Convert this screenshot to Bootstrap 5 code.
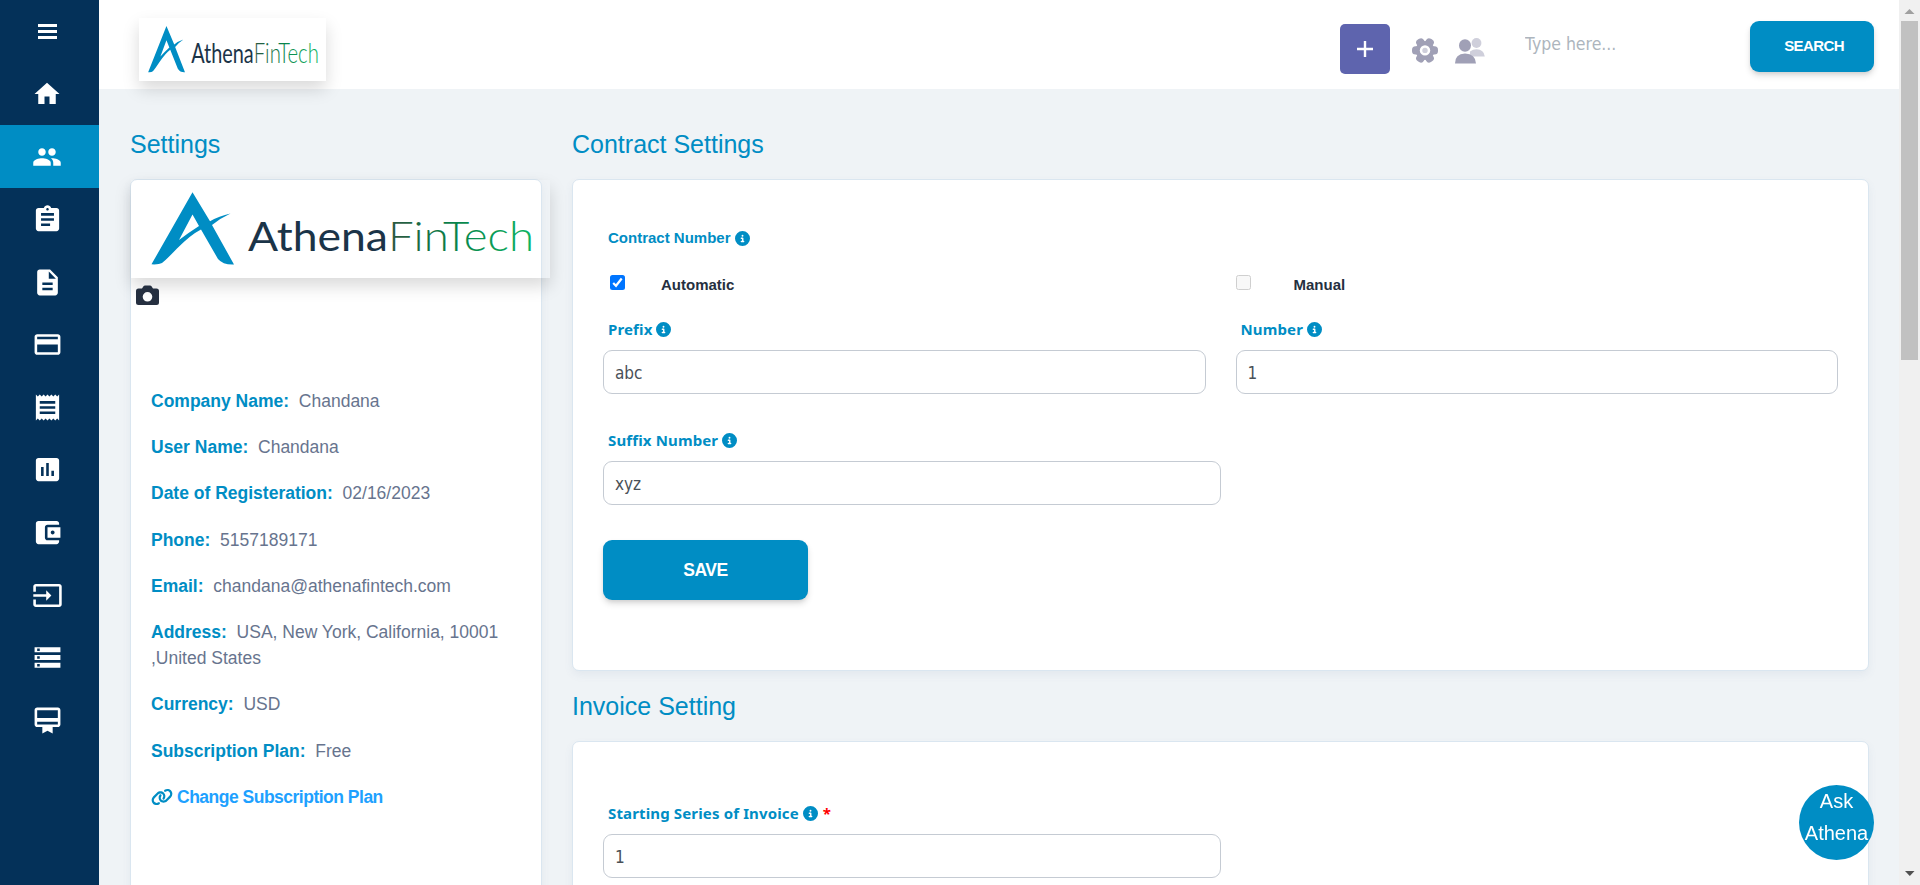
<!DOCTYPE html>
<html lang="en">
<head>
<meta charset="utf-8">
<meta name="viewport" content="width=device-width, initial-scale=1">
<title>AthenaFinTech - Settings</title>
<link href="https://cdn.jsdelivr.net/npm/bootstrap@5.3.0/dist/css/bootstrap.min.css" rel="stylesheet">
<style>
:root { --brand:#008dc4; --navy:#043159; }
body { font-family:"Liberation Sans",Arial,sans-serif; background:#eff3f6; color:#67748e; font-size:17.5px; }
.side-nav { width:99px; background:var(--navy); }
.side-nav a { height:62.6px; padding:1px 5px 0 0; color:#fff; }
.side-nav a.active { background:var(--brand); }
.side-nav svg { width:31px; height:31px; fill:currentColor; }
.side-nav .burger { height:62.5px; }
.side-nav .burger svg { width:19px; height:15px; }
.side-nav .ic-sm { width:30px; height:30px; }
.top-bar { height:89px; padding:0 25px 0 40px; }
.logo-frame { box-shadow:0 8px 16px rgba(0,0,0,.15); }
.logo-frame svg { display:block; width:100%; height:100%; }
.logo-top { width:187px; height:63px; margin-top:18px; }
.logo-side { width:419px; height:98px; }
.word-mark { font-family:Lato,"Open Sans",sans-serif; font-size:41.5px; }
.btn-add { width:50px; height:50px; margin-top:24px; border-radius:5px; background:#5e64ae; }
.head-icons { margin:38px 0 0 22px; }
.btn-brand { background:var(--brand); color:#fff; font-weight:700; border:0; border-radius:9px; box-shadow:0 4px 7px -1px rgba(0,0,0,.16),0 2px 4px -1px rgba(0,0,0,.07); }
.btn-search { width:124px; height:51px; margin-top:21px; font-size:15px; letter-spacing:-.6px; }
.btn-save { width:205px; height:60px; font-size:17.5px; letter-spacing:-.45px; margin-top:35px; }
.search-box { width:225px; height:44px; margin:22px 0 0 40px; border:0; padding:0; font-size:17.5px; }
.search-box, .field { font-family:"DejaVu Sans Condensed","DejaVu Sans",sans-serif; font-stretch:condensed; color:#495057; }
.search-box::placeholder { color:#adb5bd; opacity:1; }
.page-title { color:var(--brand); font-size:25px; line-height:30px; font-weight:400; margin:0 0 20px; }
.panel { background:#fff; border:1px solid #dae6f0; border-radius:7px; box-shadow:0 4px 8px rgba(90,120,150,.08); }
.col-profile { width:412px; }
.col-forms { width:1297px; margin-left:30px; }
.content-area { padding:40px 0 0 31px; }
.panel-profile { height:760px; }
.camera { margin:7px 0 0 5px; width:23px; height:21px; display:block; }
.profile-list { padding:82px 20px 0 20px; line-height:26.2px; }
.profile-list p { margin:0 0 20px; }
.profile-list b { color:var(--brand); }
.profile-list a { color:#1ea1ff; font-weight:700; text-decoration:none; letter-spacing:-.5px; }
.panel-contract { height:492px; padding:47px 30px 0; margin-bottom:20px; }
.panel-invoice { height:300px; padding:60px 30px 0; }
.lbl { color:var(--brand); font-weight:700; font-size:15px; line-height:22px; padding-left:5px; display:flex; align-items:center; }
.lbl-alt { font-family:"Noto Sans",Tahoma,sans-serif; letter-spacing:.14px; }
.lbl-gap { margin-top:35px; }
.lbl svg { width:15px; height:15px; margin-left:4px; fill:var(--brand); }
.lbl .req { color:#f00; margin-left:5px; }
.field { display:block; width:100%; height:44px; border:1px solid #c5cbd3; border-radius:9px; padding:1px 11px 0; margin-top:10px; font-size:17px; background:#fff; }
.half-field { width:618px; }
.two-up { --bs-gutter-x:30px; }
.choice { font-size:15px; font-weight:700; color:#252f40; line-height:22px; height:50px; margin-top:15px; display:flex; align-items:flex-start; padding-top:10px; }
.tick { width:15px; height:15px; margin:1px 36px 0 7px; border-radius:2.5px; flex:none; }
.tick-on { background:#0075ff; }
.tick-off { border:1px solid #cfcfcf; background:#f8f8f8; margin:1px 43px 0 0; }
.ask { position:fixed; right:46px; top:785px; width:75px; height:75px; border-radius:50%; background:var(--brand); color:#fff; font-size:20px; line-height:32px; text-align:center; z-index:5; }
.scroll-track { width:21px; background:#f0f0f0; }
.scroll-thumb { width:17px; height:339px; background:#c1c1c1; }
</style>
</head>
<body class="overflow-hidden">
<svg width="0" height="0" class="position-absolute" aria-hidden="true">
  <defs>
    <linearGradient id="word" gradientUnits="userSpaceOnUse" x1="255" y1="0" x2="401" y2="0">
      <stop offset="0" stop-color="#2d5540"/><stop offset=".45" stop-color="#08814a"/><stop offset="1" stop-color="#0cb463"/>
    </linearGradient>
  </defs>
  <symbol id="logo" viewBox="0 0 419 98" preserveAspectRatio="none">
    <path fill="#008dc4" fill-rule="evenodd" d="M61.500 12.300 79 41.300Q88 36.200 99.500 33.600Q89 38.500 81 45L103 84.500Q92 85 87 79L70 49.500Q60 54.500 46 68.500Q34 81 31 83Q28 84.700 20.500 84.300ZM61.500 34.500 48 60Q57 53 68 46Z"/>
    <text class="word-mark" x="117" y="70.700" textLength="140" lengthAdjust="spacingAndGlyphs" fill="#1b3448">Athena</text>
    <text class="word-mark" x="257" y="70.700" textLength="146" lengthAdjust="spacingAndGlyphs" fill="url(#word)" font-weight="300">FinTech</text>
  </symbol>
  <symbol id="info" viewBox="0 0 512 512"><path d="M256 512A256 256 0 1 0 256 0a256 256 0 1 0 0 512zM216 336h24V272H216c-13.300 0-24-10.700-24-24s10.700-24 24-24h48c13.300 0 24 10.700 24 24v88h8c13.300 0 24 10.700 24 24s-10.700 24-24 24H216c-13.300 0-24-10.700-24-24s10.700-24 24-24zm40-208a32 32 0 1 1 0 64 32 32 0 1 1 0-64z"/></symbol>
</svg>

<div class="d-flex vh-100">
  <nav class="side-nav d-flex flex-column flex-shrink-0">
    <a href="#" class="burger d-flex align-items-center justify-content-center pb-1"><svg class="mt-1" viewBox="0 0 19 15"><path d="M0 0h19v3H0zM0 6h19v3H0zM0 12h19v3H0z"/></svg></a>
    <a href="#" class="d-flex align-items-center justify-content-center"><svg class="ic-sm" viewBox="0 0 24 24"><path d="M10 20v-6h4v6h5v-8h3L12 3 2 12h3v8z"/></svg></a>
    <a href="#" class="active d-flex align-items-center justify-content-center"><svg class="ic-sm" viewBox="0 0 24 24"><path d="M16 11c1.660 0 2.990-1.340 2.990-3S17.660 5 16 5c-1.660 0-3 1.340-3 3s1.340 3 3 3zm-8 0c1.660 0 2.990-1.340 2.990-3S9.660 5 8 5C6.340 5 5 6.340 5 8s1.340 3 3 3zm0 2c-2.330 0-7 1.170-7 3.500V19h14v-2.500c0-2.330-4.670-3.500-7-3.500zm8 0c-.29 0-.62.020-.97.050 1.160.84 1.970 1.970 1.970 3.450V19h6v-2.500c0-2.330-4.670-3.500-7-3.500z"/></svg></a>
    <a href="#" class="d-flex align-items-center justify-content-center"><svg viewBox="0 0 24 24"><path d="M19 3h-4.180C14.400 1.840 13.300 1 12 1c-1.300 0-2.400.84-2.820 2H5c-1.100 0-2 .9-2 2v14c0 1.100.9 2 2 2h14c1.100 0 2-.9 2-2V5c0-1.100-.9-2-2-2zm-7 0c.55 0 1 .45 1 1s-.45 1-1 1-1-.45-1-1 .45-1 1-1zm2 14H7v-2h7v2zm3-4H7v-2h10v2zm0-4H7V7h10v2z"/></svg></a>
    <a href="#" class="d-flex align-items-center justify-content-center"><svg viewBox="0 0 24 24"><path d="M14 2H6c-1.100 0-1.990.9-1.990 2L4 20c0 1.100.89 2 1.990 2H18c1.100 0 2-.9 2-2V8l-6-6zm2 16H8v-2h8v2zm0-4H8v-2h8v2zm-3-5V3.500L18.500 9H13z"/></svg></a>
    <a href="#" class="d-flex align-items-center justify-content-center"><svg viewBox="0 0 24 24"><path d="M20 4H4c-1.110 0-1.990.89-1.990 2L2 18c0 1.110.89 2 2 2h16c1.110 0 2-.89 2-2V6c0-1.110-.89-2-2-2zm0 14H4v-6h16v6zm0-10H4V6h16v2z"/></svg></a>
    <a href="#" class="d-flex align-items-center justify-content-center"><svg viewBox="0 0 24 24"><path d="M18 17H6v-2h12v2zm0-4H6v-2h12v2zm0-4H6V7h12v2zM3 22l1.500-1.500L6 22l1.500-1.500L9 22l1.500-1.500L12 22l1.500-1.500L15 22l1.500-1.500L18 22l1.500-1.500L21 22V2l-1.500 1.500L18 2l-1.500 1.500L15 2l-1.500 1.500L12 2l-1.500 1.500L9 2 7.500 3.500 6 2 4.500 3.500 3 2v20z"/></svg></a>
    <a href="#" class="d-flex align-items-center justify-content-center"><svg viewBox="0 0 24 24"><path d="M19 3H5c-1.100 0-2 .9-2 2v14c0 1.100.9 2 2 2h14c1.100 0 2-.9 2-2V5c0-1.100-.9-2-2-2zM9 17H7v-7h2v7zm4 0h-2V7h2v10zm4 0h-2v-4h2v4z"/></svg></a>
    <a href="#" class="d-flex align-items-center justify-content-center"><svg viewBox="0 0 24 24"><path d="M21 18v1c0 1.100-.9 2-2 2H5c-1.110 0-2-.9-2-2V5c0-1.100.89-2 2-2h14c1.100 0 2 .9 2 2v1h-9c-1.110 0-2 .9-2 2v8c0 1.100.89 2 2 2h9zm-9-2h10V8H12v8zm4-2.500c-.83 0-1.500-.67-1.500-1.500s.67-1.500 1.500-1.500 1.500.67 1.500 1.500-.67 1.500-1.500 1.500z"/></svg></a>
    <a href="#" class="d-flex align-items-center justify-content-center"><svg viewBox="0 0 24 24"><path d="M21 3.010H3c-1.100 0-2 .9-2 2V9h2V4.990h18v14.030H3V15H1v4.010c0 1.100.9 1.980 2 1.980h18c1.100 0 2-.88 2-1.980v-14c0-1.110-.9-2-2-2zM11 16l4-4-4-4v3H1v2h10v3z"/></svg></a>
    <a href="#" class="d-flex align-items-center justify-content-center"><svg viewBox="0 0 24 24"><path d="M2 20h20v-4H2v4zm2-3h2v2H4v-2zM2 4v4h20V4H2zm4 3H4V5h2v2zm-4 7h20v-4H2v4zm2-3h2v2H4v-2z"/></svg></a>
    <a href="#" class="d-flex align-items-center justify-content-center"><svg viewBox="0 0 24 24"><path d="M20 2H4c-1.110 0-2 .89-2 2v11c0 1.110.89 2 2 2h4v5l4-2 4 2v-5h4c1.110 0 2-.89 2-2V4c0-1.110-.89-2-2-2zm0 13H4v-2h16v2zm0-5H4V4h16v6z"/></svg></a>
  </nav>

  <main class="flex-grow-1 overflow-hidden">
    <header class="top-bar bg-white d-flex align-items-start">
      <div class="logo-frame logo-top me-auto"><svg aria-label="AthenaFinTech"><use href="#logo"/></svg></div>
      <button class="btn btn-add p-0 d-flex align-items-center justify-content-center"><svg width="16" height="16" viewBox="0 0 16 16"><path d="M0 8h16M8 0v16" stroke="#fff" stroke-width="2.400"/></svg></button>
      <svg class="head-icons" width="73" height="27" viewBox="0 0 73 27">
        <g fill="#a0a0b6">
          <circle cx="13" cy="12.400" r="9.500"/>
          <rect x="0" y="8.200" width="26" height="8.400" rx="3.500"/>
          <rect x="0" y="8.200" width="26" height="8.400" rx="3.500" transform="rotate(60 13 12.400)"/>
          <rect x="0" y="8.200" width="26" height="8.400" rx="3.500" transform="rotate(120 13 12.400)"/>
        </g>
        <circle cx="13" cy="12.400" r="5.200" fill="#fff"/><circle cx="13" cy="12.400" r="2.700" fill="#cfcfdb"/>
        <g fill="#cfcfdb"><ellipse cx="64.500" cy="5" rx="4.900" ry="5"/><path d="M58 18V13.500Q61 11.300 64.500 11.300Q72 11.500 72.800 18.500H58Z"/></g>
        <g fill="#a0a0b6"><ellipse cx="53" cy="7.500" rx="6" ry="6.200"/><path d="M43 25.500Q43 15.800 53 15.500Q63.500 15.800 64 25.500Z"/></g>
      </svg>
      <input class="search-box" placeholder="Type here..." aria-label="Search">
      <button class="btn btn-brand btn-search py-0 pe-0 ps-1">SEARCH</button>
    </header>

    <div class="content-area d-flex align-items-start">
      <section class="col-profile flex-shrink-0">
        <h5 class="page-title">Settings</h5>
        <div class="panel panel-profile">
          <div class="logo-frame logo-side"><svg aria-label="AthenaFinTech"><use href="#logo"/></svg></div>
          <svg class="camera" viewBox="0 0 23 21"><path fill="#252f40" fill-rule="evenodd" d="M2.500 3.500H6L7.500 1.200Q8 .5 9 .5h5q1 0 1.500.7L17 3.500h3.500Q23 3.500 23 6v11.500q0 2.500-2.500 2.500h-18Q0 20 0 17.500V6Q0 3.500 2.500 3.500ZM11.500 7a4.800 4.800 0 1 0 0 9.600a4.800 4.800 0 1 0 0-9.600Z"/></svg>
          <div class="profile-list">
            <p><b>Company Name:</b>&nbsp; Chandana</p>
            <p><b>User Name:</b>&nbsp; Chandana</p>
            <p><b>Date of Registeration:</b>&nbsp; 02/16/2023</p>
            <p><b>Phone:</b>&nbsp; 5157189171</p>
            <p><b>Email:</b>&nbsp; chandana@athenafintech.com</p>
            <p><b>Address:</b>&nbsp; USA, New York, California, 10001 ,United States</p>
            <p><b>Currency:</b>&nbsp; USD</p>
            <p><b>Subscription Plan:</b>&nbsp; Free</p>
            <p class="d-flex align-items-center"><svg class="me-1" width="22" height="18" viewBox="0 0 640 512" fill="#008dc4"><path d="M579.800 267.700c56.500-56.500 56.500-148 0-204.500c-50-50-128.800-56.500-186.300-15.400l-1.600 1.100c-14.400 10.300-17.700 30.300-7.400 44.600s30.300 17.700 44.600 7.400l1.600-1.100c32.100-22.900 76-19.300 103.800 8.600c31.500 31.500 31.500 82.500 0 114L422.300 334.800c-31.500 31.500-82.500 31.500-114 0c-27.900-27.900-31.500-71.800-8.600-103.800l1.100-1.600c10.300-14.400 6.900-34.400-7.400-44.600s-34.400-6.900-44.600 7.400l-1.100 1.600C206.500 251.200 213 330 263 380c56.500 56.500 148 56.500 204.500 0L579.800 267.700zM60.200 244.300c-56.500 56.500-56.500 148 0 204.500c50 50 128.800 56.500 186.300 15.400l1.600-1.100c14.400-10.300 17.700-30.300 7.400-44.600s-30.300-17.700-44.600-7.400l-1.600 1.100c-32.100 22.900-76 19.300-103.800-8.600C74 372 74 321 105.500 289.500L217.700 177.200c31.500-31.500 82.500-31.500 114 0c27.900 27.900 31.500 71.800 8.600 103.900l-1.100 1.600c-10.300 14.400-6.900 34.400 7.400 44.600s34.400 6.900 44.600-7.400l1.100-1.600C433.500 260.800 427 182 377 132c-56.500-56.500-148-56.500-204.500 0L60.200 244.300z"/></svg><a href="#">Change Subscription Plan</a></p>
          </div>
        </div>
      </section>

      <section class="col-forms flex-shrink-0">
        <h5 class="page-title">Contract Settings</h5>
        <div class="panel panel-contract">
          <div class="lbl">Contract Number<svg><use href="#info"/></svg></div>
          <div class="row two-up">
            <div class="col-6">
              <div class="choice"><span class="tick tick-on"><svg class="d-block" width="15" height="15" viewBox="0 0 15 15"><path d="M3.200 8 6 10.800 11.700 3.500" fill="none" stroke="#fff" stroke-width="2.200"/></svg></span><span>Automatic</span></div>
              <div class="lbl lbl-alt mt-1">Prefix<svg><use href="#info"/></svg></div>
              <input class="field" value="abc" aria-label="Prefix">
            </div>
            <div class="col-6">
              <div class="choice"><span class="tick tick-off"></span><span>Manual</span></div>
              <div class="lbl lbl-alt mt-1">Number<svg><use href="#info"/></svg></div>
              <input class="field" value="1" aria-label="Number">
            </div>
          </div>
          <div class="lbl lbl-alt lbl-gap">Suffix Number<svg><use href="#info"/></svg></div>
          <input class="field half-field" value="xyz" aria-label="Suffix Number">
          <button class="btn btn-brand btn-save p-0">SAVE</button>
        </div>
        <h5 class="page-title">Invoice Setting</h5>
        <div class="panel panel-invoice">
          <div class="lbl lbl-alt">Starting Series of Invoice<svg><use href="#info"/></svg><span class="req">*</span></div>
          <input class="field half-field" value="1" aria-label="Starting Series of Invoice">
        </div>
      </section>
    </div>
  </main>

  <div class="scroll-track flex-shrink-0 d-flex flex-column align-items-center">
    <svg width="21" height="21"><path d="M5.500 14 10.500 9l5 5z" fill="#a0a0a0"/></svg>
    <div class="scroll-thumb"></div>
    <svg class="mt-auto" width="21" height="21"><path d="M6 7h9.500l-4.700 5z" fill="#505050"/></svg>
  </div>
</div>
<div class="ask">Ask<br>Athena</div>
<script src="https://cdn.jsdelivr.net/npm/bootstrap@5.3.0/dist/js/bootstrap.bundle.min.js"></script>
</body>
</html>
